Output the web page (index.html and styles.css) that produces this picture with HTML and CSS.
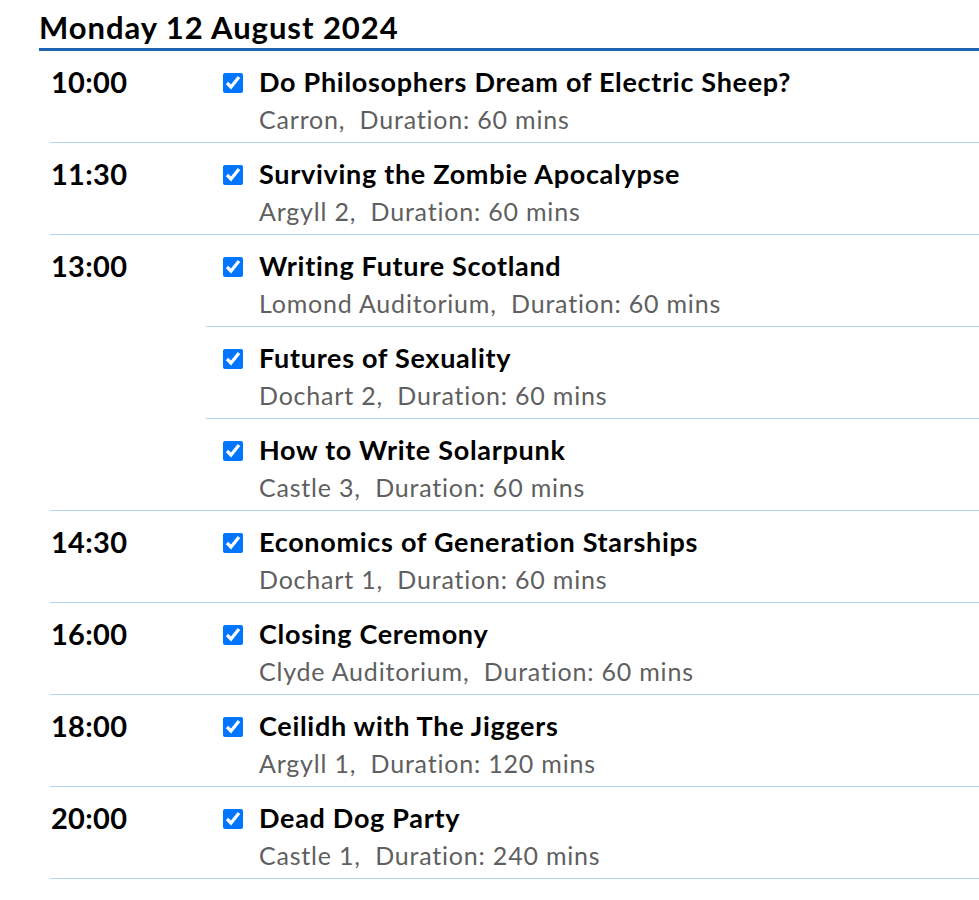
FILE: index.html
```html
<!DOCTYPE html>
<html>
<head>
<meta charset="utf-8">
<link rel="stylesheet" href="styles.css">
</head>
<body>
<div class="day">
  <h1 class="day-title">Monday 12 August 2024</h1>
  <div class="slot">
    <div class="time">10:00</div>
    <div class="items">
      <div class="item"><input type="checkbox" checked><div class="info"><div class="name">Do Philosophers Dream of Electric Sheep?</div><div class="meta">Carron,&nbsp; Duration: 60 mins</div></div></div>
    </div>
  </div>
  <div class="slot">
    <div class="time">11:30</div>
    <div class="items">
      <div class="item"><input type="checkbox" checked><div class="info"><div class="name">Surviving the Zombie Apocalypse</div><div class="meta">Argyll 2,&nbsp; Duration: 60 mins</div></div></div>
    </div>
  </div>
  <div class="slot">
    <div class="time">13:00</div>
    <div class="items">
      <div class="item"><input type="checkbox" checked><div class="info"><div class="name">Writing Future Scotland</div><div class="meta">Lomond Auditorium,&nbsp; Duration: 60 mins</div></div></div>
      <div class="item"><input type="checkbox" checked><div class="info"><div class="name">Futures of Sexuality</div><div class="meta">Dochart 2,&nbsp; Duration: 60 mins</div></div></div>
      <div class="item"><input type="checkbox" checked><div class="info"><div class="name">How to Write Solarpunk</div><div class="meta">Castle 3,&nbsp; Duration: 60 mins</div></div></div>
    </div>
  </div>
  <div class="slot">
    <div class="time">14:30</div>
    <div class="items">
      <div class="item"><input type="checkbox" checked><div class="info"><div class="name">Economics of Generation Starships</div><div class="meta">Dochart 1,&nbsp; Duration: 60 mins</div></div></div>
    </div>
  </div>
  <div class="slot">
    <div class="time">16:00</div>
    <div class="items">
      <div class="item"><input type="checkbox" checked><div class="info"><div class="name">Closing Ceremony</div><div class="meta">Clyde Auditorium,&nbsp; Duration: 60 mins</div></div></div>
    </div>
  </div>
  <div class="slot">
    <div class="time">18:00</div>
    <div class="items">
      <div class="item"><input type="checkbox" checked><div class="info"><div class="name">Ceilidh with The Jiggers</div><div class="meta">Argyll 1,&nbsp; Duration: 120 mins</div></div></div>
    </div>
  </div>
  <div class="slot">
    <div class="time">20:00</div>
    <div class="items">
      <div class="item"><input type="checkbox" checked><div class="info"><div class="name">Dead Dog Party</div><div class="meta">Castle 1,&nbsp; Duration: 240 mins</div></div></div>
    </div>
  </div>
</div>
</body>
</html>
```
FILE: styles.css
```css
html, body {
  margin: 0;
  padding: 0;
  background: #fff;
}
body {
  font-family: Lato, "Open Sans", sans-serif;
  color: #000;
}
.day {
  padding-left: 39px;
}
.day-title {
  margin: 0;
  padding-top: 9px;
  font-size: 31px;
  letter-spacing: 0.95px;
  line-height: 36px;
  font-weight: 700;
  height: 39px;
  border-bottom: 3px solid #1f63b4;
}
.slot {
  display: flex;
  margin-left: 11px;
  border-bottom: 1px solid #b3d4fb;
}
.time {
  width: 156px;
  flex: none;
  padding-left: 1px;
  box-sizing: border-box;
  font-size: 29px;
  letter-spacing: 0.3px;
  font-weight: 700;
  line-height: 32px;
  padding-top: 15px;
}
.items {
  flex: 1;
}
.item {
  display: flex;
  align-items: flex-start;
  height: 91px;
  padding-left: 17px;
  border-bottom: 1px solid #b3d4fb;
}
.item:last-child {
  border-bottom: none;
}
.item input {
  width: 20px;
  height: 20px;
  margin: 22px 16px 0 0;
  accent-color: #0075ff;
  flex: none;
}
.info {
  padding-top: 15px;
}
.name {
  font-size: 27px;
  letter-spacing: 0.7px;
  font-weight: 700;
  line-height: 32px;
}
.meta {
  font-size: 25px;
  letter-spacing: 0.8px;
  line-height: 30px;
  color: #5f5f5f;
  margin-top: 6px;
}
```
